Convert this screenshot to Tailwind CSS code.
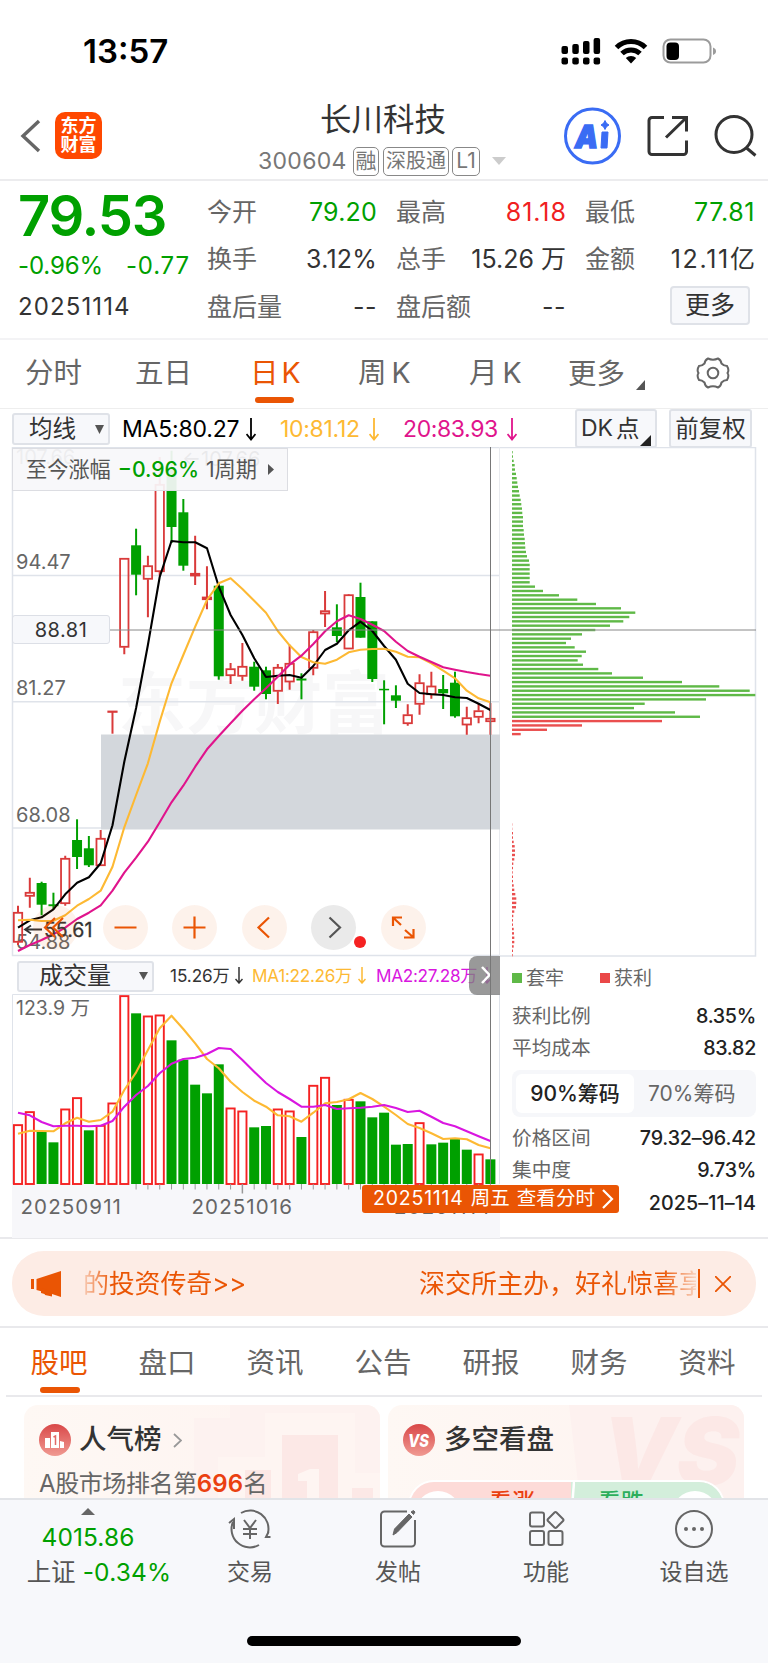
<!DOCTYPE html>
<html lang="zh-CN">
<head>
  <meta charset="UTF-8" />
  <meta name="viewport" content="width=device-width, initial-scale=1" />
  <title>长川科技 300604</title>
  <script src="https://cdn.jsdelivr.net/npm/@tailwindcss/browser@4"></script>
</head>
<body class="bg-white w-[768px] h-[1663px] overflow-hidden flex flex-col text-[#333] font-['Inter','Noto_Sans_CJK_SC',sans-serif] leading-none whitespace-nowrap">

  <!-- status bar -->
  <div class="h-[96px] shrink-0 flex items-center justify-between pl-[83px] pr-[52px] pt-[6px]">
    <div class="text-[33px] font-semibold text-black tracking-[0px]">13:57</div>
    <svg class="w-[156px] h-[30px]" viewBox="560 36 156 30">
      <g fill="#000">
        <rect x="561.5" y="46" width="6.5" height="8" rx="2" /><rect x="572.3" y="44" width="6.5" height="10" rx="2" /><rect x="583" y="41" width="6.5" height="13" rx="2" /><rect x="593.6" y="38" width="6.5" height="16" rx="2" />
        <rect x="561.5" y="57.5" width="6.5" height="7" rx="2" /><rect x="572.3" y="57.5" width="6.5" height="7" rx="2" /><rect x="583" y="57.5" width="6.5" height="7" rx="2" /><rect x="593.6" y="57.5" width="6.5" height="7" rx="2" />
      </g>
      <g fill="none" stroke="#000" stroke-width="5">
        <path d="M616.5 47.5a20.5 20.5 0 0 1 29 0" />
        <path d="M622 53.5a13 13 0 0 1 18 0" />
      </g>
      <path d="M631 63.5l-5.2-5.4a7.4 7.4 0 0 1 10.4 0z" fill="#000" />
      <rect x="663.5" y="39.5" width="47" height="23" rx="7" fill="none" stroke="#9b9b9b" stroke-width="2" />
      <rect x="666.5" y="42.5" width="12.5" height="17.5" rx="4" fill="#000" />
      <path d="M713 47.5c2 .8 3 2 3 3.7s-1 2.900-3 3.700z" fill="#9b9b9b" />
    </svg>
  </div>

  <!-- title bar -->
  <div class="h-[85px] shrink-0 border-b-2 border-[#ececee] relative flex justify-between pl-[20px] pr-[10px]">
    <div class="flex items-start gap-[14px] pt-[16px]">
      <svg class="w-[21px] h-[48px]" viewBox="0 0 21 48"><path d="M19 9L3 24l16 15" fill="none" stroke="#666" stroke-width="3.4" /></svg>
      <div class="w-[47px] h-[47px] rounded-[10px] bg-[#ff4800] text-white text-[18px] leading-[19px] font-bold text-center pt-[4px]">东方<br />财富</div>
    </div>
    <div class="absolute left-[258px] top-[8px] w-[248px]">
      <div class="text-[31.5px] leading-[32px] ml-[62px]">长川科技</div>
      <div class="flex items-center h-[30px] mt-[10px] text-[#777] text-[23px]">
        <span class="w-[95px] tracking-[0.3px]">300604</span>
        <span class="w-[26px] h-[29px] border-[1.5px] border-[#888] rounded-[5px] text-[21px] leading-[26px] flex justify-center">融</span>
        <span class="w-[66px] h-[29px] border-[1.5px] border-[#888] rounded-[5px] text-[20px] leading-[26px] ml-[4px] flex justify-center">深股通</span>
        <span class="w-[28px] h-[29px] border-[1.5px] border-[#888] rounded-[5px] text-[21px] leading-[26px] ml-[3px] flex justify-center">L1</span>
        <svg class="w-[14px] h-[8px] ml-[12px]" viewBox="0 0 14 8"><path d="M0 0h14L7 8z" fill="#ccc" /></svg>
      </div>
    </div>
    <svg class="w-[194px] h-[60px] mt-[10px]" viewBox="564 106 194 60">
      <circle cx="592.5" cy="136" r="27" fill="none" stroke="#3a6cf4" stroke-width="3" />
      <text x="575" y="147.5" font-size="32" font-weight="900" font-style="italic" fill="#3a6cf4" stroke="#3a6cf4" stroke-width="1.5" textLength="23" lengthAdjust="spacingAndGlyphs">A</text>
      <path d="M602 132h6l-1 16h-6z" fill="#3a6cf4" stroke="#3a6cf4" stroke-width="1" />
      <path d="M605 120.5q1 3.5 4 4.5q-3 1-4 4.5q-1-3.5-4-4.500q3-1 4-4.500z" fill="#3a6cf4" stroke="#3a6cf4" />
      <g fill="none" stroke="#333" stroke-width="3">
        <path d="M664 117.5h-12a3 3 0 0 0-3 3v31a3 3 0 0 0 3 3h31.500a3 3 0 0 0 3-3v-11" />
        <path d="M672 117.5h14.500v14M686 118l-20 19.500" />
        <circle cx="734" cy="134.5" r="18" /><path d="M746 147.5l9.500 8" />
      </g>
    </svg>
  </div>

  <!-- quote -->
  <div class="h-[159px] shrink-0 border-b-2 border-[#f3f3f5] flex pl-[18px]">
    <div class="w-[189px]">
      <div class="text-[56px] h-[55px] font-semibold text-[#00a000] tracking-[-1.2px] mt-[7px]">79.53</div>
      <div class="flex text-[24px] text-[#00a000] mt-[11px] tracking-[-0.1px]"><span class="w-[108px]">-0.96%</span><span class="tracking-[0.8px]">-0.77</span></div>
      <div class="text-[24px] mt-[17px] tracking-[1.1px]">20251114</div>
    </div>
    <div class="grid grid-cols-[170px_170px_170px] gap-x-[19px] auto-rows-[47.5px] pt-[7.5px] text-[25px] w-[548px] [&>div]:flex [&>div]:items-center [&>div]:justify-between [&>div]:leading-none">
      <div><span class="text-[#666]">今开</span><span class="text-[#00a000] tracking-[0.2px]">79.20</span></div>
      <div><span class="text-[#666]">最高</span><span class="text-[#f02020] tracking-[1px] -mr-[1px]">81.18</span></div>
      <div><span class="text-[#666]">最低</span><span class="text-[#00a000] tracking-[0.6px]">77.81</span></div>
      <div><span class="text-[#666]">换手</span><span class="tracking-[0.2px]">3.12%</span></div>
      <div><span class="text-[#666]">总手</span><span>15.26 万</span></div>
      <div><span class="text-[#666]">金额</span><span><span class="tracking-[1.7px]">12.11</span>亿</span></div>
      <div><span class="text-[#666]">盘后量</span><span class="tracking-[0.5px]">--</span></div>
      <div><span class="text-[#666]">盘后额</span><span class="tracking-[0.5px]">--</span></div>
      <div><span></span><span class="w-[80px] h-[39px] mr-[5px] -mt-[4px] rounded-[4px] border-2 border-[#dfe2e8] bg-[#f7f8fb] flex items-center justify-center text-[25px]">更多</span></div>
    </div>
  </div>

  <!-- period tabs -->
  <div class="h-[69px] shrink-0 border-b border-[#eee] flex text-[28.5px] text-[#666] leading-[66px] relative">
    <span class="w-[110px] pl-[25px]">分时</span>
    <span class="w-[116px] pl-[25px]">五日</span>
    <span class="w-[107px] pl-[24px] text-[#ea5504]">日<span class="ml-[3px]">K</span></span>
    <span class="w-[112px] pl-[25px]">周<span class="ml-[5px]">K</span></span>
    <span class="w-[112px] pl-[24px]">月<span class="ml-[5px]">K</span></span>
    <span class="w-[139px] pl-[11px] flex items-center">更多<svg class="w-[9px] h-[10px] ml-[11px] mt-[21px]" viewBox="0 0 9 10"><path d="M9 0v10H0z" fill="#555" /></svg></span>
    <svg class="w-[34px] h-[34px] mt-[16px]" viewBox="-17 -17 34 34" fill="none" stroke="#666" stroke-width="2">
      <path d="M-5-14.5Q0-12 5-14.500Q8-13 8.500-9.500Q11-7 14-7Q16.500-3 14.500 0Q16.500 3 14 7Q11 7 8.500 9.500Q8 13 5 14.500Q0 12-5 14.500Q-8 13-8.500 9.500Q-11 7-14 7Q-16.500 3-14.500 0Q-16.500-3-14-7Q-11-7-8.500-9.500Q-8-13-5-14.500z" />
      <circle r="5.3" />
    </svg>
    <div class="absolute left-[255px] bottom-[5px] w-[39px] h-[6px] rounded-full bg-[#ea5504]"></div>
  </div>

  <!-- moving average legend -->
  <div class="h-[38px] shrink-0 flex items-center text-[23px] pl-[12px] pt-[2px] relative">
    <div class="w-[98px] h-[32px] rounded-[3px] border-2 border-[#dfe2e8] bg-[#f7f8fb] flex items-center pl-[15px] text-[23.5px]">均线<svg class="w-[9px] h-[9px] ml-[19px]" viewBox="0 0 9 9"><path d="M0 0h9L4.500 9z" fill="#555" /></svg></div>
    <div class="flex items-center w-[158px] ml-[12px] text-black tracking-[-0.2px]">MA5:80.27<svg class="w-[10px] h-[23px] ml-[7px]" viewBox="0 0 10 23" fill="none" stroke="currentColor" stroke-width="1.8"><path d="M5 0v21M.5 16L5 21.500L9.500 16" /></svg></div>
    <div class="flex items-center w-[123px] text-[#fdb933] tracking-[-0.3px]">10:81.12<svg class="w-[10px] h-[23px] ml-[9px]" viewBox="0 0 10 23" fill="none" stroke="currentColor" stroke-width="1.8"><path d="M5 0v21M.5 16L5 21.500L9.500 16" /></svg></div>
    <div class="flex items-center text-[#e0148c] tracking-[-0.4px]">20:83.93<svg class="w-[10px] h-[23px] ml-[9px]" viewBox="0 0 10 23" fill="none" stroke="currentColor" stroke-width="1.8"><path d="M5 0v21M.5 16L5 21.500L9.500 16" /></svg></div>
    <div class="absolute left-[575px] top-0 flex gap-[12px] text-[23.5px]">
      <div class="w-[82px] h-[39px] rounded-[3px] border-2 border-[#dfe2e8] bg-[#f7f8fb] flex items-center pl-[4px]"><span class="text-[23px]">DK</span><span class="ml-[3px]">点</span><svg class="w-[11px] h-[11px] mt-[23px]" viewBox="0 0 11 11"><path d="M11 0v11H0z" fill="#222" /></svg></div>
      <div class="w-[83px] h-[39px] rounded-[3px] border-2 border-[#dfe2e8] bg-[#f7f8fb] flex items-center justify-center">前复权</div>
    </div>
  </div>

  <!-- chart area: k-line + volume on the left, chip distribution on the right -->
  <div class="h-[792px] shrink-0 relative border-b-2 border-[#e9e9ec]">
    <div class="flex">
      <svg id="kline" class="w-[500px] h-[510px]" viewBox="0 447 500 510"></svg>
      <svg id="chips" class="w-[268px] h-[510px]" viewBox="500 447 268 510"></svg>
    </div>
    <div class="flex">
      <div class="w-[500px]">
        <div class="h-[38px] flex items-center pl-[17px] text-[17.2px]">
          <div class="w-[137px] h-[31px] rounded-[3px] border-2 border-[#dfe2e8] bg-[#f7f8fb] flex items-center pl-[20px] text-[24px]">成交量<svg class="w-[9px] h-[8px] ml-[28px]" viewBox="0 0 9 8"><path d="M0 0h9L4.500 8z" fill="#555" /></svg></div>
          <span class="ml-[16px] w-[82px] flex items-center tracking-[-0.1px]">15.26万<svg class="w-[8px] h-[17px] ml-[5px]" viewBox="0 0 8 17" fill="none" stroke="currentColor" stroke-width="1.5"><path d="M4 0v16M.5 12L4 16L7.500 12" /></svg></span>
          <span class="w-[124px] flex items-center text-[#fdb933] tracking-[-0.3px]">MA1:22.26万<svg class="w-[8px] h-[17px] ml-[6px]" viewBox="0 0 8 17" fill="none" stroke="currentColor" stroke-width="1.5"><path d="M4 0v16M.5 12L4 16L7.500 12" /></svg></span>
          <span class="flex items-center text-[#d916e0] tracking-[-0.3px]">MA2:27.28万<svg class="w-[8px] h-[17px] ml-[6px]" viewBox="0 0 8 17" fill="none" stroke="currentColor" stroke-width="1.5"><path d="M4 0v16M.5 12L4 16L7.500 12" /></svg></span>
        </div>
        <svg id="volume" class="w-[500px] h-[244px] -mt-px" viewBox="0 994 500 244"></svg>
      </div>
      <div class="w-[256px] pl-[12px] text-[19.7px] text-[#666]">
        <div class="flex items-center h-[42px]"><i class="w-[10px] h-[10px] bg-[#5fb947]"></i><span class="ml-[4px] w-[74px] text-[19px]">套牢</span><i class="w-[10px] h-[10px] bg-[#ea4848]"></i><span class="ml-[4px] text-[19px]">获利</span></div>
        <div class="flex items-center justify-between h-[31px] mt-[2px]"><span>获利比例</span><span class="text-[#222] font-medium tracking-[-0.3px]">8.35%</span></div>
        <div class="flex items-center justify-between h-[31px] mt-[1px]"><span>平均成本</span><span class="text-[#222] font-medium tracking-[-0.3px]">83.82</span></div>
        <div class="h-[47px] mt-[6px] rounded-[8px] bg-[#f6f7fa] flex items-center p-[4px] text-[21px]">
          <span class="w-[118px] h-[39px] rounded-[6px] bg-white flex items-center justify-center font-medium text-[#222]">90%筹码</span><span class="ml-[14px]">70%筹码</span>
        </div>
        <div class="flex items-center justify-between h-[31px] mt-[6px]"><span>价格区间</span><span class="text-[#222] font-medium tracking-[-0.15px]">79.32–96.42</span></div>
        <div class="flex items-center justify-between h-[31px] mt-[1px]"><span>集中度</span><span class="text-[#222] font-medium tracking-[-0.3px]">9.73%</span></div>
        <div class="flex items-center justify-end h-[31px] mt-[2px]"><span class="text-[#222] font-medium tracking-[0.1px]">2025–11–14</span></div>
      </div>
    </div>

    <!-- overlays -->
    <div class="absolute left-[12px] top-[1px] w-[276px] h-[43px] border border-[#dcdde2] bg-[#f7f7fa]/93 flex items-center pl-[13px] text-[21.2px] text-[#555]">至今涨幅<span class="text-[#00a000] ml-[7px] font-medium">−0.96%</span><span class="ml-[7px]">1周期</span><svg class="w-[6px] h-[11px] ml-[11px]" viewBox="0 0 6 11"><path d="M0 0v11l6-5.500z" fill="#555" /></svg></div>
    <div class="absolute left-[12px] top-[168px] w-[98px] h-[29px] rounded-[3px] border border-[#dcdfe6] bg-[#f7f8fb] flex items-center justify-center text-[20px] tracking-[0.5px]">88.81</div>
    <div class="absolute left-[33px] top-[457.5px] flex gap-[24.5px] [&>svg]:w-[45px] [&>svg]:h-[45px] [&>svg]:rounded-full">
      <svg class="bg-[#ea5504]/8" viewBox="0 0 45 45" fill="none" stroke="#ea5504" stroke-width="2.2"><path d="M22 13l-10 9.500L22 32M30 13l-10 9.500L30 32" /></svg>
      <svg class="bg-[#ea5504]/8" viewBox="0 0 45 45" fill="none" stroke="#ea5504" stroke-width="2.2"><path d="M11.500 22.500h22" /></svg>
      <svg class="bg-[#ea5504]/8" viewBox="0 0 45 45" fill="none" stroke="#ea5504" stroke-width="2.2"><path d="M11.500 22.500h22M22.500 11.500v22" /></svg>
      <svg class="bg-[#ea5504]/8" viewBox="0 0 45 45" fill="none" stroke="#ea5504" stroke-width="2.2"><path d="M27 12.500l-10.500 10L27 32.500" /></svg>
      <svg class="bg-[#eaeaea]" viewBox="0 0 45 45" fill="none" stroke="#555" stroke-width="2.2"><path d="M18.500 12.500l10.500 10L18.500 32.500" /></svg>
      <svg class="bg-[#ea5504]/8" viewBox="0 0 45 45" fill="none" stroke="#ea5504" stroke-width="2.2"><path d="M12 21v-8.500h9M12 12.500l8 7.500M32.500 24v8.500H23M32.500 32.500L24 25" /></svg>
    </div>
    <div class="absolute left-[354px] top-[489px] w-[12px] h-[12px] rounded-full bg-[#f52222]"></div>
    <div class="absolute left-[469px] top-[508.5px] w-[31px] h-[39.5px] rounded-l-[8px] bg-[#808080]/80 flex items-center pl-[11px]"><svg class="w-[12px] h-[18px]" viewBox="0 0 12 18" fill="none" stroke="#fff" stroke-width="2.5"><path d="M2 1l7.500 8L2 17" /></svg></div>
    <div class="absolute left-[490px] top-0 w-px h-[737px] bg-[#777]"></div>
    <div class="absolute left-[362px] top-[737.5px] w-[257px] h-[28px] rounded-[3px] bg-[#ea5504] text-white text-[19.5px] flex items-center pl-[11px]"><span class="tracking-[0.8px]">20251114</span><span class="ml-[7px]">周五</span><span class="ml-[7px] tracking-[0.1px]">查看分时</span><svg class="w-[12px] h-[20px] ml-[7px]" viewBox="0 0 12 20" fill="none" stroke="#fff" stroke-width="2.2"><path d="M1 1l9 9l-9 9" /></svg></div>
  </div>

  <!-- notice -->
  <div class="h-[89px] shrink-0 border-b-2 border-[#e9e9ec] px-[12px] pt-[12px]">
    <div class="h-[65px] rounded-[32px] bg-[#fdece5] flex items-center text-[#ea5504] text-[26px] relative">
      <svg class="w-[32px] h-[28px] ml-[19px]" viewBox="0 0 32 28" fill="#ea5504"><path d="M0 9h3v10H0zM5.500 9L30 1v26l-9-3v2.500l-7-1.500-1-3-7.500-2z" /><path d="M10 18v5l7 2v-5z" /></svg>
      <span class="w-[163px] ml-[20px] bg-linear-to-r from-[#ea5504]/20 to-[#ea5504] to-18% bg-clip-text text-transparent leading-[36px] tracking-[-0.2px]">的投资传奇&gt;&gt;</span>
      <span class="w-[277px] ml-[173px] overflow-hidden bg-linear-to-r from-[#ea5504] from-88% to-[#ea5504]/15 bg-clip-text text-transparent leading-[36px]">深交所主办，好礼惊喜享不停</span>
      <span class="w-[1.5px] h-[29px] bg-[#ea5504] ml-[2px]"></span>
      <svg class="w-[16px] h-[16px] ml-[15px]" viewBox="0 0 16 16" stroke="#ea5504" stroke-width="1.8"><path d="M0 0l16 16M16 0L0 16" /></svg>
    </div>
  </div>

  <!-- content tabs -->
  <div class="h-[69px] shrink-0 mx-[6px] border-b-2 border-[#e9e9ec] relative flex text-[28.5px] text-[#666] leading-[70px] [&>span]:w-[108px] [&>span]:shrink-0 [&>span]:text-center">
    <span class="text-[#ea5504] -ml-px">股吧</span><span>盘口</span><span>资讯</span><span>公告</span><span>研报</span><span>财务</span><span>资料</span>
    <div class="absolute left-[34px] bottom-[2px] w-[40px] h-[6px] rounded-full bg-[#ea5504]"></div>
  </div>

  <!-- cards -->
  <div class="h-[101px] shrink-0 overflow-hidden flex gap-[8px] pl-[24px] pt-[8px]">
    <div class="w-[356px] h-[130px] rounded-[14px] bg-linear-to-r from-[#fef8f4] to-[#fef3f0] relative overflow-hidden">
      <svg class="absolute left-0 top-0 w-[356px] h-[96px]" viewBox="24 1404 356 96">
        <path d="M194 1417h36v-13h150v96H194z" fill="#fdf2f0" />
        <path d="M218 1456h47v-44h90v60h25v28H218z" fill="#fef5f2" />
        <path d="M282 1434h56v66h-56zM245 1469h26v31h-26zM352 1487h21v13h-21z" fill="#fce8e6" />
        <path d="M298 1473l12-5h9v32h-12v-20h-9z" fill="#fef5f2" />
      </svg>
      <div class="relative flex items-center pl-[15px] pt-[19px] text-[27.5px] font-medium">
        <svg class="w-[32px] h-[32px]" viewBox="0 0 32 32"><defs><linearGradient id="red" x2="0" y2="1"><stop stop-color="#d94848" /><stop offset="1" stop-color="#f09a92" /></linearGradient></defs><circle cx="16" cy="16" r="16" fill="url(#red)" /><path d="M6 14h5v10H6zM12 8h8v16h-8zM21 17l4 1v6h-4z" fill="#fff" /><path d="M14.500 13l2-1v9" fill="none" stroke="#e26a66" stroke-width="1.5" /></svg>
        <span class="ml-[8px]">人气榜</span>
        <svg class="w-[9px] h-[15px] ml-[11px]" viewBox="0 0 9 15" fill="none" stroke="#999" stroke-width="1.8"><path d="M1 1l7 6.500L1 14" /></svg>
      </div>
      <div class="relative text-[24px] text-[#666] pl-[15px] mt-[15px] leading-[26px] tracking-[-0.4px]">A股市场排名第<span class="text-[#ea4010] font-semibold tracking-[0.2px]">696</span>名</div>
    </div>
    <div class="w-[356px] h-[130px] rounded-[14px] bg-linear-to-r from-[#fef8f4] to-[#fef3f0] relative overflow-hidden">
      <svg class="absolute left-0 top-0 w-[356px] h-[96px]" viewBox="388 1404 356 96">
        <path d="M569 1404h175v96H580z" fill="#fdf1ef" />
        <text x="602" y="1484" font-size="94" font-weight="900" font-style="italic" fill="#fce8e6">VS</text>
      </svg>
      <div class="relative flex items-center pl-[15px] pt-[19px] text-[27.5px] font-medium">
        <svg class="w-[32px] h-[32px]" viewBox="0 0 32 32"><circle cx="16" cy="16" r="16" fill="url(#red)" /><text x="5" y="22.5" font-size="18" font-weight="800" font-style="italic" fill="#fff" textLength="21" lengthAdjust="spacingAndGlyphs">VS</text></svg>
        <span class="ml-[9px]">多空看盘</span>
      </div>
      <div class="absolute left-[20px] top-[75px] w-[317px] h-[52px] rounded-full border-2 border-white overflow-hidden flex text-[23px] font-medium leading-[41px]">
        <div class="w-[161px] bg-[#fddbd8] text-[#ea4010] pl-[79px]">看涨</div>
        <svg class="w-[6px] h-[52px] -ml-[2px] -mr-[4px] relative" viewBox="0 0 6 52"><path d="M5 0L1 52" stroke="#fff" stroke-width="2.5" /></svg>
        <div class="flex-1 bg-[#d3eedb] text-[#2dae5c] pl-[27px]">看跌</div>
        <i class="absolute left-[5px] top-[9px] w-[46px] h-[46px] rounded-full bg-white"></i>
        <i class="absolute right-[5px] top-[9px] w-[46px] h-[46px] rounded-full bg-white"></i>
      </div>
    </div>
  </div>

  <!-- bottom bar -->
  <div class="flex-1 border-t-2 border-[#e2e4e8] bg-[#f7f8fb] relative flex text-[23px] text-[#555]">
    <div class="w-[176px] flex flex-col items-center pt-[8px]">
      <svg class="w-[14px] h-[7px]" viewBox="0 0 14 7"><path d="M7 0l7 7H0z" fill="#666" /></svg>
      <div class="text-[24.5px] text-[#00a000] mt-[10px] tracking-[0.1px]">4015.86</div>
      <div class="flex items-center mt-[10px] ml-[22px] text-[24.5px]">上证<span class="text-[#00a000] ml-[7px] text-[24.5px] tracking-[0.2px]">-0.34%</span></div>
    </div>
    <div class="flex-1 flex pt-[9px] [&>div]:w-[148px] [&>div]:flex [&>div]:flex-col [&>div]:items-center [&_svg]:w-[44px] [&_svg]:h-[40px] [&_span]:mt-[12px]">
      <div><svg viewBox="-22 -20 44 40" fill="none" stroke="#666" stroke-width="2"><path d="M-9-16A18.300 18.300 0 0 1 18 4M9 16A18.300 18.300 0 0 1-17-7" /><path d="M-21-6l5-4v10M20.500 8h-4.500l2.500-5" /><path d="M-6-9l6 8l6-8M0-1v11M-7 0H7M-7 5H7" /></svg><span>交易</span></div>
      <div><svg viewBox="-22 -20 44 40" fill="none" stroke="#666" stroke-width="2"><path d="M9-17.500h-22.500a3.500 3.500 0 0 0-3.500 3.500v28a3.500 3.500 0 0 0 3.500 3.500h27a3.500 3.500 0 0 0 3.500-3.500v-23" /><path d="M-5 6l1.500-6L11-15l3 3L-1 3.500zM13-17l2.500-1.500l1.500 1.500l-1.500 2.500z" fill="#666" stroke-width="1" /></svg><span>发帖</span></div>
      <div><svg viewBox="-22 -20 44 40" fill="none" stroke="#666" stroke-width="2"><rect x="-16" y="-16.5" width="14" height="14" rx="2" /><rect x="-16" y="2" width="14" height="14" rx="2" /><rect x="2.5" y="2" width="14" height="14" rx="2" /><path d="M8.500-16.500q1-1 2 0l6.500 6.500q1 1 0 2l-6.500 6.500q-1 1-2 0L2-8q-1-1 0-2z" /></svg><span>功能</span></div>
      <div><svg viewBox="-22 -20 44 40" fill="none" stroke="#666" stroke-width="2"><circle r="18" /><g fill="#666" stroke="none"><circle cx="-8" r="2" /><circle r="2" /><circle cx="8" r="2" /></g></svg><span>设自选</span></div>
    </div>
    <div class="absolute left-[247px] bottom-[17px] w-[274px] h-[10px] rounded-full bg-black"></div>
  </div>

  <script>
    const RED = "#d93a3a", GREEN = "#00a000", GRID = "#dfe3ea";
    const cx = i => 18 + 11.81 * i;
    const line = (pts, color, f = y => y) =>
      `<polyline points="${pts.map((y, i) => cx(i).toFixed(1) + "," + f(y).toFixed(1)).join(" ")}" fill="none" stroke="${color}" stroke-width="2.1" stroke-linejoin="round" />`;

    // [up?, body top, body bottom, wick top, wick bottom]
    const candles = [
      [1,912.3,942.3,905.7,945],[1,892.3,896.3,877.7,907.7],[0,883,904.7,881.7,915.3],[0,904.3,906.2,892.7,909.3],
      [1,858.3,903.7,855.7,905.7],[0,840,857,819.3,869],[0,848.3,865.3,836,867],[1,838.3,865.7,830,865.7],
      [1,711,712,711,733.7],[1,558.3,647.3,558,654.3],[0,545.3,574.7,528.7,595.3],[1,565.7,579.3,555.7,617.3],
      [1,484.3,571.7,457,575.7],[0,470,527,450.7,543],[0,512.3,565.7,499,570.7],[1,573.3,576,535.7,585],
      [1,597,599.7,566.3,609.3],[0,585.7,676.3,583,679.7],[1,668.7,675.7,663,684],[1,666.3,676.3,643,680.7],
      [0,666.7,686.7,661.7,690.7],[0,670.3,694,666.7,699.3],[1,667.3,691.3,664,704],[1,663.3,682,644.7,689.7],
      [0,678.5,680.5,673.3,699.3],[1,631.7,668.3,630,675.3],[1,610.7,614,591,627],[0,627.3,636,604.3,642],
      [1,594.7,649,594,649],[0,597,637.7,582.7,637.7],[0,621.3,679,621.3,682],[0,688.8,690.3,680.3,724.3],
      [0,695.3,700.7,685.3,708],[1,714.7,723.7,704.3,725.7],[1,682.7,704.3,674.3,714.7],[1,686,694.7,671.7,698.7],
      [0,689,693.3,675,709],[0,682.7,716.3,671.7,717.7],[1,717.7,725,706.7,734.7],[1,710.7,717.3,703,723.3],
      [1,718.3,721.7,703,734.7]
    ];
    const ma5 = [927.7,920.3,917.3,909.3,894.3,882.7,877.3,863.3,825.3,761.7,708,645,577,541,542.3,542.3,548.3,586.7,615,635,658.3,677,675.7,675,677.7,666,650,643.7,630.3,621.7,631,646,659.7,683.7,693,694.3,695,697.3,698,703.7,710];
    const ma10 = [920.3,919.7,921,920.7,915.3,905.7,899,890.7,866.7,827.3,795,763.3,721.7,683.3,655,626.7,600,583.3,578.3,589,600.7,612.7,631,645.3,657,662.3,663.7,659.7,652.3,649.7,649,648.7,651.7,656.7,657.3,663.3,670.7,678.3,690.7,698.3,702.3];
    const ma20 = [951,945,940,934.3,927.7,919,912.7,905.3,890.7,872.7,857.7,841.7,822.3,802.3,785.7,766.7,749.3,736,723.3,710.7,699.3,688.3,676.7,664.7,655.7,644,631.3,621.3,615.3,619,624.7,631,641.7,651,656.7,662,667.3,669.7,672,674,675.7];

    let k = `<text x="118" y="728" font-size="68" font-weight="700" fill="#f7f7f8">东方财富</text>`;
    [575.4, 701.7, 828].forEach(y => k += `<path d="M12 ${y}H500" stroke="${GRID}" stroke-width="1.5" />`);
    k += `<path d="M500 447.5H12.500V955.500H500" fill="none" stroke="${GRID}" stroke-width="1.5" /><path d="M499.500 447V956" stroke="#e9ebef" />`;
    k += `<rect x="101" y="734.5" width="399" height="95" fill="#d3d7dc" />`;
    [["107.66", 464], ["94.47", 568.5], ["81.27", 695], ["68.08", 822], ["54.88", 948.5]].forEach(([t, y]) =>
      k += `<text x="16" y="${y}" font-size="20" fill="#666">${t}</text>`);
    k += `<text x="182" y="466" font-size="20" fill="#333">←107.66</text>`;
    candles.forEach(([up, t, b, hi, lo], i) => {
      const x = cx(i), c = up ? RED : GREEN;
      if (up) {
        k += `<path d="M${x} ${hi}V${t}M${x} ${b}V${lo}" stroke="${c}" stroke-width="2" />`;
        k += `<rect x="${x - 4.2}" y="${t + .5}" width="8.4" height="${Math.max(b - t - 1, .4)}" fill="none" stroke="${c}" stroke-width="1.8" />`;
      } else {
        k += `<path d="M${x} ${hi}V${lo}" stroke="${c}" stroke-width="2" /><rect x="${x - 5}" y="${t}" width="10" height="${b - t}" fill="${c}" />`;
      }
    });
    k += line(ma5, "#000") + line(ma10, "#fdb933") + line(ma20, "#e0148c");
    k += `<path d="M110 630H500" stroke="#888" /><path d="M42 929.500H25M31 925.500l-6 4l6 4" fill="none" stroke="#333" stroke-width="1.8" />`;
    k += `<text x="44" y="937" font-size="19.5" fill="#333" stroke="#333" stroke-width=".3">55.61</text>`;
    document.getElementById("kline").innerHTML = k;

    // chip distribution, bar lengths in thirds of a pixel
    const trapped = [2,3,5,8,9,12,14,16,18,21,23,26,28,30,31,33,33,33,35,36,38,39,40,42,45,51,53,53,53,53,53,69,93,141,196,252,327,370,352,334,294,250,210,177,162,188,222,209,197,213,259,300,393,510,622,713,730,582,398,366,489,564];
    const profit = [450,210,105,26];
    const profitLow = [1,1,3,3,5,8,9,9,7,4,3,2,3,3,5,7,10,13,13,12,7,4,3,3,5,6,7,7,5,3,2];
    const chip = (w, y, c) => `<rect x="512" y="${(y - 1).toFixed(2)}" width="${(w / 3).toFixed(1)}" height="2.4" fill="${c}" />`;
    let c = `<path d="M500 447.5H755.500V956H500" fill="none" stroke="${GRID}" stroke-width="1.5" />`;
    trapped.forEach((w, i) => c += chip(w, 452 + i * 4.337, "#5fb947"));
    profit.forEach((w, i) => c += chip(w, 452 + (62 + i) * 4.337, "#ea4f4f"));
    profitLow.forEach((w, i) => c += chip(w, 824.3 + i * 4.355, "#ea4f4f"));
    c += `<path d="M500 630H756" stroke="#888" />`;
    document.getElementById("chips").innerHTML = c;

    // volume, [up?, bar top]
    const vols = [[1,508],[1,469],[0,530],[0,562],[1,461],[1,427],[0,526],[1,510],[1,443],[1,121],[0,175],[1,182],[1,179],[0,256],[0,314],[0,389],[0,415],[0,328],[1,458],[1,467],[0,517],[0,513],[1,461],[1,467],[0,546],[1,390],[1,366],[0,450],[1,432],[0,439],[0,487],[0,473],[0,569],[0,567],[1,502],[0,568],[0,563],[0,552],[0,584],[1,596],[0,613]];
    const vma1 = [536,527,528,529,505,488,500,495,470,405,352,285,220,182,222,265,312,340,380,411,437,455,481,484,500,473,445,441,433,414,432,455,480,507,519,535,552,550,553,570,580];
    const vma2 = [473,481,501,514,512,512,514,512,498,455,420,393,355,326,312,308,297,279,282,315,350,384,411,432,455,455,450,462,460,458,455,450,459,471,467,485,504,514,529,544,558];
    const vy = y => 955 + y / 3;
    let v = `<rect x="12" y="1184" width="488" height="54" fill="#f7f7fa" /><path d="M12.500 1184V994.500H499.500V1184" fill="none" stroke="${GRID}" />`;
    v += `<text x="16" y="1014.5" font-size="19.5" fill="#666">123.9 万</text>`;
    vols.forEach(([up, y], i) => {
      const x = cx(i), t = vy(y);
      v += up
        ? `<rect x="${x - 4.1}" y="${t + .8}" width="8.2" height="${1183.2 - t}" fill="#fff" stroke="#f52222" stroke-width="1.9" />`
        : `<rect x="${x - 5}" y="${t}" width="10" height="${1184 - t}" fill="${GREEN}" />`;
      if (i > 9) v += `<path d="M${x} 1184v${i === 19 ? 9.5 : 5.5}" stroke="#999" stroke-width="${i === 19 ? 1.5 : 1}" />`;
    });
    v += line(vma1, "#fdb933", vy) + line(vma2, "#d916e0", vy);
    v += `<g font-size="20.5" fill="#666" letter-spacing="1.1"><text x="20.5" y="1214">20250911</text><text x="191.5" y="1214">20251016</text><text x="394" y="1214">20251114</text></g>`;
    document.getElementById("volume").innerHTML = v;
  </script>
</body>
</html>
